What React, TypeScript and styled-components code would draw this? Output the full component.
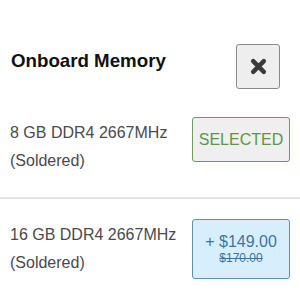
import React from "react";
import styled, { createGlobalStyle } from "styled-components";

const Global = createGlobalStyle`
  html, body { margin: 0; padding: 0; background: #fff; }
  body { font-family: "Liberation Sans", Arial, Helvetica, sans-serif; }
`;

const Page = styled.div`
  width: 300px;
  height: 300px;
  overflow: hidden;
  background: #fff;
`;

const Header = styled.div`
  display: flex;
  justify-content: space-between;
  align-items: flex-start;
  padding: 44px 20px 8px 11px;
`;

const Title = styled.h3`
  margin: 6px 0 0;
  font-size: 18.72px;
  font-weight: 700;
  color: #111;
  line-height: 22px;
`;

const CloseButton = styled.button`
  width: 44px;
  height: 45px;
  padding: 0;
  display: flex;
  align-items: center;
  justify-content: center;
  background: #eeeeee;
  border: 1px solid #8a8a8a;
  border-radius: 3px;
  color: #3a3a3a;
`;

const Row = styled.div<{ $divider?: boolean }>`
  display: flex;
  justify-content: space-between;
  align-items: flex-start;
  padding: 20px 10px 22px 10px;
  border-top: ${(p) => (p.$divider ? "2px solid #e3e3e3" : "none")};
`;

const Desc = styled.div`
  margin-top: 2px;
  font-size: 16px;
  line-height: 28px;
  color: #4a4a4a;
`;

const OptionButton = styled.div<{ $variant: "selected" | "price" }>`
  width: 98px;
  box-sizing: border-box;
  display: flex;
  flex-direction: column;
  align-items: center;
  justify-content: center;
  border-radius: 3px;
  height: ${(p) => (p.$variant === "selected" ? "45px" : "60px")};
  background: ${(p) => (p.$variant === "selected" ? "#efefef" : "#d7effc")};
  border: 1px solid ${(p) => (p.$variant === "selected" ? "#6a9f57" : "#5e8fb8")};
  color: ${(p) => (p.$variant === "selected" ? "#5a9744" : "#3f74a0")};
`;

const Label = styled.span`
  font-size: 16px;
  line-height: 18px;
`;

const Old = styled.span`
  font-size: 12px;
  line-height: 14px;
  text-decoration: line-through;
`;

export default function App() {
  return (
    <Page>
      <Global />
      <Header>
        <Title>Onboard Memory</Title>
        <CloseButton aria-label="close">
          <svg width="17" height="17" viewBox="0 0 16 16">
            <path
              d="M3 3 L13 13 M13 3 L3 13"
              stroke="currentColor"
              strokeWidth="4.2"
              strokeLinecap="round"
            />
          </svg>
        </CloseButton>
      </Header>
      <Row>
        <Desc>
          8 GB DDR4 2667MHz
          <br />
          (Soldered)
        </Desc>
        <OptionButton $variant="selected">
          <Label>SELECTED</Label>
        </OptionButton>
      </Row>
      <Row $divider>
        <Desc>
          16 GB DDR4 2667MHz
          <br />
          (Soldered)
        </Desc>
        <OptionButton $variant="price">
          <Label>+ $149.00</Label>
          <Old>$170.00</Old>
        </OptionButton>
      </Row>
    </Page>
  );
}
